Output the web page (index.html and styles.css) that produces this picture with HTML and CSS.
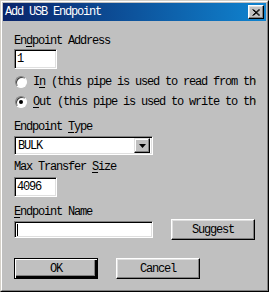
FILE: index.html
```html
<!DOCTYPE html>
<html lang="en">
<head>
    <meta charset="UTF-8">
    <title>Add USB Endpoint</title>
    <link rel="stylesheet" href="styles.css">
</head>
<body>
    <div class="window">
        <div class="frame">
            <div class="titlebar">
                <span class="title">Add USB Endpoint</span>
                <span class="close">
                    <svg width="8" height="7" viewBox="0 0 8 7"><path d="M0.5 0.5 L7 6.5 M1.5 0.5 L8 6.5 M7 0.5 L0.5 6.5 M8 0.5 L1.5 6.5" stroke="#000" stroke-width="1"/></svg>
                </span>
            </div>
            <div class="content">
                <div class="label">En<u>d</u>point Address</div>
                <div class="field field-short">1</div>

                <div class="radio first">
                    <span class="bullet"></span>
                    <span class="radio-text">I<u>n</u> (this pipe is used to read from the device)</span>
                </div>
                <div class="radio">
                    <span class="bullet checked"></span>
                    <span class="radio-text"><u>O</u>ut (this pipe is used to write to the device)</span>
                </div>

                <div class="label label-type">Endpoint <u>T</u>ype</div>
                <div class="combo">
                    <span class="combo-value">BULK</span>
                    <span class="combo-button">
                        <svg width="7" height="4" viewBox="0 0 7 4"><path d="M0 0 H7 L3.5 4 Z" fill="#000"/></svg>
                    </span>
                </div>

                <div class="label label-size">Max Transfer <u>S</u>ize</div>
                <div class="field field-short">4096</div>

                <div class="label label-name"><u>E</u>ndpoint Name</div>
                <div class="row">
                    <div class="field field-name"><span class="caret"></span></div>
                    <button class="btn">Suggest</button>
                </div>

                <div class="row actions">
                    <button class="btn btn-default">OK</button>
                    <button class="btn">Cancel</button>
                </div>
            </div>
        </div>
    </div>
</body>
</html>
```

FILE: styles.css
```css
body {
    margin: 0;
    background-color: #c0c0c0;
    font-family: "Liberation Mono", "Courier New", monospace;
    font-size: 12px;
    letter-spacing: -1.2px;
    color: #000;
}
u {
    text-decoration-thickness: 1px;
    text-underline-offset: 2px;
}
.window {
    width: 269px;
    height: 292px;
    box-sizing: border-box;
    border: 1px solid;
    border-color: #d4d0c8 #000 #000 #d4d0c8;
    background-color: #c0c0c0;
}
.frame {
    height: 100%;
    box-sizing: border-box;
    border: 1px solid;
    border-color: #fff #808080 #808080 #fff;
    padding: 1px;
}
.titlebar {
    height: 18px;
    display: flex;
    align-items: center;
    justify-content: space-between;
    padding: 0 2px;
    background: linear-gradient(to right, #0a246a, #1084d0);
    color: #fff;
}
.title {
    line-height: 14px;
}
.close {
    width: 16px;
    height: 14px;
    box-sizing: border-box;
    display: flex;
    align-items: center;
    justify-content: center;
    background-color: #c0c0c0;
    border: 1px solid;
    border-color: #fff #000 #000 #fff;
    box-shadow: inset -1px -1px #808080, inset 1px 1px #dfdfdf;
}
.content {
    padding: 13px 11px 0;
}
.label {
    line-height: 14px;
    white-space: nowrap;
}
.label-type {
    margin-top: 11px;
}
.label-size {
    margin-top: 5px;
}
.label-name {
    margin-top: 8px;
}
.field {
    box-sizing: border-box;
    background-color: #fff;
    border: 1px solid;
    border-color: #808080 #fff #fff #808080;
    box-shadow: inset 1px 1px #000, inset -1px -1px #dfdfdf;
    padding: 0 2px;
    line-height: 18px;
}
.field-short {
    width: 43px;
    height: 20px;
    margin-top: 1px;
}
.label-size + .field-short {
    margin-top: 3px;
}
.field-name {
    width: 139px;
    height: 17px;
    display: flex;
    align-items: center;
}
.caret {
    width: 1px;
    height: 12px;
    background-color: #000;
}
.radio {
    width: 242px;
    height: 14px;
    margin-top: 6px;
    display: flex;
    align-items: center;
    gap: 6px;
    overflow: hidden;
    white-space: nowrap;
}
.bullet {
    flex: none;
    width: 12px;
    height: 12px;
    box-sizing: border-box;
    margin-left: 1px;
    border-radius: 50%;
    border: 1px solid;
    border-color: #808080 #fff #fff #808080;
    box-shadow: inset 1px 1px #404040;
    background-color: #fff;
    display: flex;
    align-items: center;
    justify-content: center;
}
.bullet.checked::after {
    content: "";
    width: 4px;
    height: 4px;
    border-radius: 50%;
    background-color: #000;
}
.combo {
    width: 139px;
    height: 19px;
    margin-top: 2px;
    box-sizing: border-box;
    background-color: #fff;
    border: 1px solid;
    border-color: #808080 #fff #fff #808080;
    box-shadow: inset 1px 1px #000, inset -1px -1px #dfdfdf;
    padding: 2px 2px 2px 3px;
    display: flex;
    align-items: center;
    justify-content: space-between;
}
.combo-button {
    width: 16px;
    height: 15px;
    box-sizing: border-box;
    background-color: #c0c0c0;
    border: 1px solid;
    border-color: #dfdfdf #000 #000 #dfdfdf;
    box-shadow: inset -1px -1px #808080, inset 1px 1px #fff;
    display: flex;
    align-items: center;
    justify-content: center;
}
.row {
    display: flex;
    align-items: center;
    gap: 18px;
}
.actions {
    margin-top: 18px;
}
.btn {
    width: 84px;
    height: 21px;
    box-sizing: border-box;
    background-color: #c0c0c0;
    border: 1px solid;
    border-color: #fff #000 #000 #fff;
    box-shadow: inset -1px -1px #808080, inset 1px 1px #dfdfdf;
    font-family: inherit;
    font-size: 12px;
    letter-spacing: -1.2px;
    color: #000;
    padding: 0;
}
.btn-default {
    border: 1px solid #000;
    box-shadow: inset 1px 1px #fff, inset -2px -2px #000, inset -3px -3px #808080;
}
```
